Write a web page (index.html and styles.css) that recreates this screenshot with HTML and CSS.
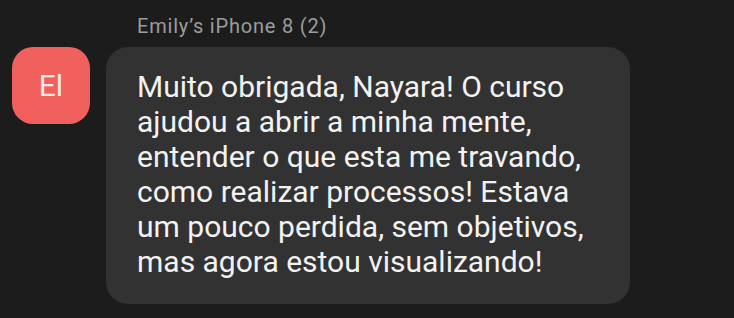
FILE: index.html
```html
<!DOCTYPE html>
<html lang="pt">
<head>
    <meta charset="UTF-8">
    <title>Mensagem</title>
    <link rel="stylesheet" href="styles.css">
</head>
<body>
    <div class="message">
        <div class="avatar">El</div>
        <div class="message-body">
            <div class="sender">Emily’s iPhone 8 (2)</div>
            <div class="bubble">
                Muito obrigada, Nayara! O curso<br>
                ajudou a abrir a minha mente,<br>
                entender o que esta me travando,<br>
                como realizar processos! Estava<br>
                um pouco perdida, sem objetivos,<br>
                mas agora estou visualizando!
            </div>
        </div>
    </div>
</body>
</html>
```

FILE: styles.css
```css
body, html {
    margin: 0;
    padding: 0;
    height: 100%;
    background-color: #1c1c1c;
    font-family: 'Roboto', 'Inter', sans-serif;
    overflow: hidden;
}
.message {
    display: flex;
    align-items: flex-start;
    padding: 12px 0 0 12px;
}
.avatar {
    width: 78px;
    height: 77px;
    margin-top: 35px;
    border-radius: 21px;
    background-color: #f0605c;
    color: #fbe9e7;
    font-size: 30px;
    display: flex;
    justify-content: center;
    align-items: center;
    flex-shrink: 0;
}
.message-body {
    margin-left: 16px;
    display: flex;
    flex-direction: column;
}
.sender {
    color: #9c9c9c;
    font-size: 20px;
    letter-spacing: 0.8px;
    padding-left: 31px;
    height: 35px;
    line-height: 28px;
}
.bubble {
    width: 463px;
    white-space: nowrap;
    background-color: #323232;
    border-radius: 22px;
    padding: 22px 30px 25px 31px;
    color: #f2f2f2;
    font-size: 30px;
    line-height: 35px;
}
```
